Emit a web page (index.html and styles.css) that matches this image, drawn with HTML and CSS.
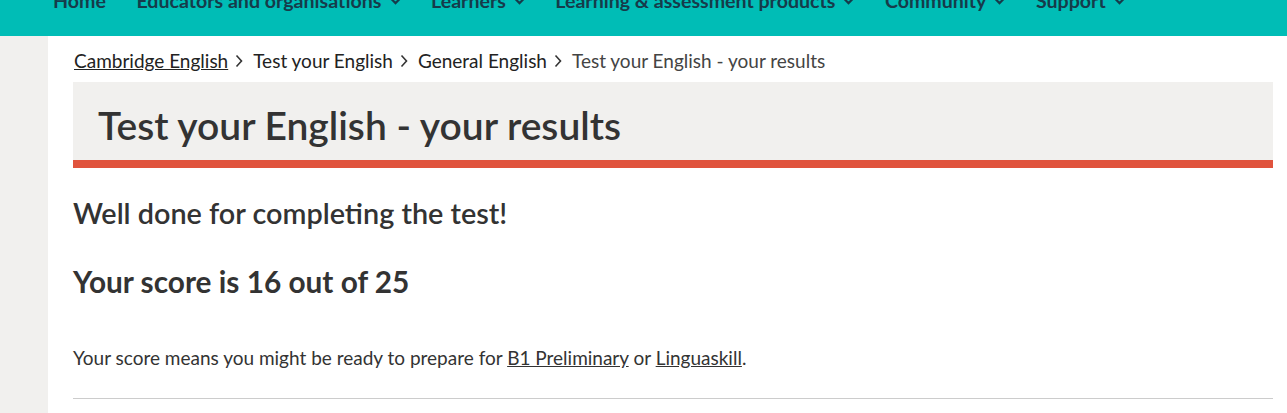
FILE: index.html
```html
<!DOCTYPE html>
<html lang="en">
<head>
<meta charset="utf-8">
<title>Test your English - your results</title>
<link rel="stylesheet" href="styles.css">
</head>
<body>
<nav class="topnav">
  <ul class="nav-list">
    <li class="nav-item">Home</li>
    <li class="nav-item">Educators and organisations <svg class="chev" viewBox="0 0 10 10"><path d="M1.5 3 L5 6.5 L8.5 3" /></svg></li>
    <li class="nav-item">Learners <svg class="chev" viewBox="0 0 10 10"><path d="M1.5 3 L5 6.5 L8.5 3" /></svg></li>
    <li class="nav-item">Learning &amp; assessment products <svg class="chev" viewBox="0 0 10 10"><path d="M1.5 3 L5 6.5 L8.5 3" /></svg></li>
    <li class="nav-item">Community <svg class="chev" viewBox="0 0 10 10"><path d="M1.5 3 L5 6.5 L8.5 3" /></svg></li>
    <li class="nav-item">Support <svg class="chev" viewBox="0 0 10 10"><path d="M1.5 3 L5 6.5 L8.5 3" /></svg></li>
  </ul>
</nav>
<div class="page">
  <aside class="side"></aside>
  <main class="content">
    <ol class="crumbs">
      <li><a href="#" class="crumb-link">Cambridge English</a></li>
      <li class="sep"><svg class="sep-icon" viewBox="0 0 8 14"><path d="M1.5 1.5 L6.5 7 L1.5 12.5" /></svg></li>
      <li>Test your English</li>
      <li class="sep"><svg class="sep-icon" viewBox="0 0 8 14"><path d="M1.5 1.5 L6.5 7 L1.5 12.5" /></svg></li>
      <li>General English</li>
      <li class="sep"><svg class="sep-icon" viewBox="0 0 8 14"><path d="M1.5 1.5 L6.5 7 L1.5 12.5" /></svg></li>
      <li class="current">Test your English - your results</li>
    </ol>
    <header class="title-box">
      <h1 class="title">Test your English - your results</h1>
    </header>
    <h2 class="well">Well done for completing the test!</h2>
    <h2 class="score">Your score is 16 out of 25</h2>
    <p class="para">Your score means you might be ready to prepare for <a href="#">B1 Preliminary</a> or <a href="#">Linguaskill</a>.</p>
    <hr class="rule">
  </main>
</div>
</body>
</html>
```
FILE: styles.css
```css
* { box-sizing: border-box; }
html, body { margin: 0; padding: 0; }
body {
  font-family: Lato, "Open Sans", sans-serif;
  color: #333;
  background: #fff;
  width: 1287px;
  height: 413px;
  overflow: hidden;
}
.topnav {
  height: 36px;
  background: #00bdb6;
  overflow: hidden;
}
.nav-list {
  list-style: none;
  margin: -10px 0 0 0;
  padding: 0 0 0 53px;
  display: flex;
  gap: 30.5px;
}
.nav-item {
  font-weight: 700;
  font-size: 19.6px;
  line-height: 22px;
  color: #163b4a;
  display: flex;
  align-items: center;
  gap: 8px;
  white-space: nowrap;
}
.chev { width: 11px; height: 11px; }
.chev path { fill: none; stroke: #163b4a; stroke-width: 2; }
.page {
  display: flex;
  min-height: 377px;
}
.side {
  width: 48px;
  background: #f1f0ee;
  flex: none;
}
.content {
  flex: 1;
  padding: 0 14px 0 25px;
}
.crumbs {
  list-style: none;
  margin: 0;
  padding: 13px 0 0 1px;
  display: flex;
  align-items: center;
  gap: 6px;
  font-size: 19px;
  line-height: 24px;
  color: #222;
}
.crumb-link { color: #222; }
.crumbs .current { color: #444; }
.sep { display: flex; align-items: center; margin: 0 4px 0 1px; }
.sep-icon { width: 8px; height: 14px; }
.sep-icon path { fill: none; stroke: #333; stroke-width: 1.6; }
.title-box {
  margin-top: 9px;
  background: #f1f0ee;
  border-bottom: 8px solid #e0533d;
  height: 86px;
  padding: 20px 25px 0;
}
.title {
  margin: 0;
  font-size: 39px;
  font-weight: 600;
  line-height: 46px;
  color: #333;
}
.well {
  margin: 28px 0 0 0;
  font-size: 28.8px;
  font-weight: 600;
  line-height: 34px;
}
.score {
  margin: 34px 0 0 0;
  font-size: 29.8px;
  font-weight: 700;
  line-height: 36px;
}
.para {
  margin: 45px 0 0 0;
  font-size: 19px;
  line-height: 26px;
}
.para a { color: #333; }
.rule {
  margin: 27px 0 0 0;
  border: 0;
  border-top: 1px solid #ccc;
}
```
